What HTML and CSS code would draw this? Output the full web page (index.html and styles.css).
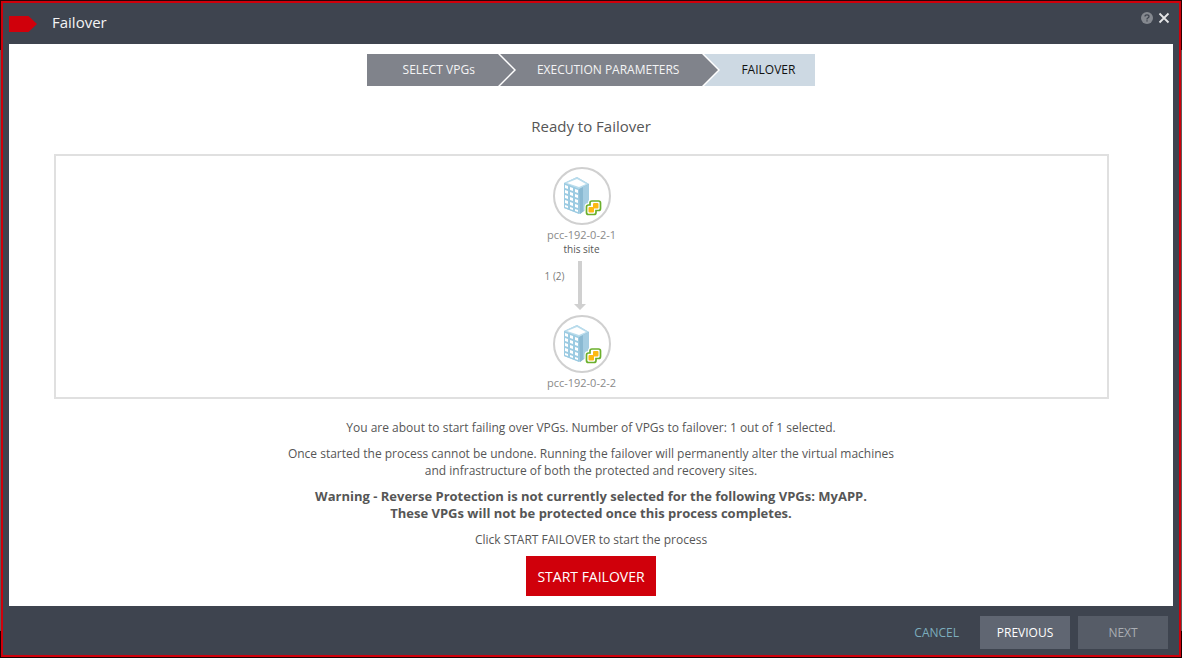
FILE: index.html
```html
<!DOCTYPE html>
<html lang="en">
<head>
<meta charset="utf-8">
<title>Failover</title>
<link rel="stylesheet" href="styles.css">
</head>
<body>
<svg class="defs" width="0" height="0" aria-hidden="true">
  <symbol id="site" viewBox="0 0 58 58">
    <circle cx="29" cy="29" r="28" fill="#fff" stroke="#d0d0d0" stroke-width="2"/>
    <path d="M11 16 24 10 36 17 36 40 27 47 11 41z" fill="#a8cfe3"/>
    <path d="M11 16 24 10 36 17 26 22z" fill="#b9dcec"/>
    <path d="M14 16 24 12 33 17 26 20z" fill="#fff"/>
    <path d="M11 16 26 22 26 47 11 41z" fill="#9ccbe2"/>
    <path d="M26 22 36 17 36 40 27 47z" fill="#8ab9d2"/>
    <path d="M30 20 36 17 36 40 30 44z" fill="#a5cde2"/>
    <g fill="#fff">
      <path d="M12 18 15 19V22L12 21zM17 20 20 21V24L17 23zM22 22 25 23V26L22 25z"/>
      <path d="M12 23 15 24V27L12 26zM17 25 20 26V29L17 28zM22 27 25 28V31L22 30z"/>
      <path d="M12 28 15 29V32L12 31zM17 30 20 31V34L17 33zM22 32 25 33V36L22 35z"/>
      <path d="M12 33 15 34V37L12 36zM17 35 20 36V39L17 38zM22 37 25 38V41L22 40z"/>
      <path d="M12 38 15 39V41L12 40zM17 40 20 41V43L17 42zM22 42 25 43V45L22 44z"/>
    </g>
    <path d="M39 34h6.500q2 0 2 2v5.500q0 2-2 2H43v2q0 2-2 2h-5.500q-2 0-2-2V40q0-2 2-2H37v-2q0-2 2-2z" fill="#fff" stroke="#fff" stroke-width="4"/>
    <path d="M39 34h6.500q2 0 2 2v5.500q0 2-2 2H43v2q0 2-2 2h-5.500q-2 0-2-2V40q0-2 2-2H37v-2q0-2 2-2z" fill="#fff" stroke="#6bb02c" stroke-width="1.700"/>
    <rect x="40" y="36" width="5.500" height="5.500" rx="1" fill="#fdb913"/>
    <rect x="35.500" y="40" width="5.500" height="5.500" rx="1" fill="#fdb913"/>
  </symbol>
</svg>
<main class="dialog">
  <header class="titlebar">
    <svg class="tag" width="28" height="16" viewBox="0 0 28 16" aria-hidden="true"><path d="M0 0h19.500L28 8l-8.500 8H0z" fill="#d0000b"/></svg>
    <h1 class="title">Failover</h1>
    <div class="tools">
      <button class="tool" type="button" aria-label="Help">
        <svg width="12" height="12" viewBox="0 0 12 12"><circle cx="6" cy="6" r="6" fill="#84888f"/><path d="M4 4.600Q4 2.800 6 2.800T8 4.500Q8 5.400 6.800 6 6 6.400 6 7.400M6 8.300v1.300" fill="none" stroke="#3e444f" stroke-width="1.300"/></svg>
      </button>
      <button class="tool" type="button" aria-label="Close">
        <svg width="12" height="12" viewBox="0 0 12 12"><path d="M1.500 1.500l9 9m0-9l-9 9" stroke="#e4e5e7" stroke-width="1.800" fill="none"/></svg>
      </button>
    </div>
  </header>

  <section class="content">
    <ol class="steps">
      <li class="step step-first">SELECT VPGs</li>
      <li class="divider" aria-hidden="true"><svg width="18" height="32" viewBox="0 0 18 32"><path d="M0 0h18v32H0z" fill="#80838b"/><path d="M0-1 17 16 0 33" fill="none" stroke="#fff" stroke-width="1.500"/></svg></li>
      <li class="step">EXECUTION PARAMETERS</li>
      <li class="divider" aria-hidden="true"><svg width="18" height="32" viewBox="0 0 18 32"><path d="M0 0h18v32H0z" fill="#cdd9e3"/><path d="M0-1 17 16 0 33" fill="#80838b" stroke="#fff" stroke-width="1.500"/></svg></li>
      <li class="step step-current" aria-current="step">FAILOVER</li>
    </ol>

    <h2 class="heading">Ready to Failover</h2>

    <div class="diagram">
      <svg class="site" width="58" height="58" role="img" aria-label="Protected site"><use href="#site"/></svg>
      <span class="site-name">pcc-192-0-2-1</span>
      <span class="site-note">this site</span>
      <div class="link">
        <span class="link-label">1 (2)</span>
        <svg width="12" height="49" viewBox="0 0 12 49" aria-hidden="true"><path d="M4 0h4v43h4l-6 6-6-6h4z" fill="#d0d0d0"/></svg>
      </div>
      <svg class="site" width="58" height="58" role="img" aria-label="Recovery site"><use href="#site"/></svg>
      <span class="site-name">pcc-192-0-2-2</span>
    </div>

    <div class="message">
      <p>You are about to start failing over VPGs. Number of VPGs to failover: 1 out of 1 selected.</p>
      <p>Once started the process cannot be undone. Running the failover will permanently alter the virtual machines<br>and infrastructure of both the protected and recovery sites.</p>
      <p class="warning">Warning - Reverse Protection is not currently selected for the following VPGs: MyAPP.<br>These VPGs will not be protected once this process completes.</p>
      <p>Click START FAILOVER to start the process</p>
    </div>
    <button class="start" type="button">START FAILOVER</button>
  </section>

  <footer class="actions">
    <button class="cancel" type="button">CANCEL</button>
    <button class="nav" type="button">PREVIOUS</button>
    <button class="nav" type="button" disabled>NEXT</button>
  </footer>
</main>
</body>
</html>
```
FILE: styles.css
```css
* {
  box-sizing: border-box;
}

body {
  margin: 0;
  padding: 1px 1px 2px;
  min-height: 100vh;
  display: flex;
  background: linear-gradient(#2a0508 50px, #5c5c5c 50px, #5c5c5c calc(100% - 28px), #1a0204 calc(100% - 28px));
  color: #565656;
  font: 12px/17px "Open Sans", sans-serif;
}

button {
  margin: 0;
  padding: 0;
  border: 0;
  background: none;
  color: inherit;
  font: inherit;
  cursor: pointer;
}

h1, h2, p, ol {
  margin: 0;
  padding: 0;
  font-weight: 400;
}

.defs {
  position: absolute;
}

.dialog {
  flex: 1;
  display: flex;
  flex-direction: column;
  padding: 0 6px;
  border: 2px solid #d0000b;
  background: #3e444f;
}

.titlebar {
  display: flex;
  align-items: center;
  height: 41px;
}

.title {
  flex: 1;
  margin-left: 15px;
  padding-bottom: 3px;
  color: #f4f4f5;
  font-size: 15px;
  line-height: 20px;
}

.tools {
  display: flex;
  gap: 5px;
  margin: 0 3px 12px 0;
}

.tool {
  display: flex;
}

.content {
  flex: 1;
  display: flex;
  flex-direction: column;
  align-items: center;
  padding: 10px 0;
  background: #fff;
}

.steps {
  display: flex;
  list-style: none;
  line-height: 32px;
}

.step {
  padding: 0 23px 0 21px;
  background: #80838b;
  color: #f4f4f5;
}

.step-first {
  padding-left: 36px;
}

.step-current {
  padding-right: 20px;
  background: #cdd9e3;
  color: #111;
}

.divider {
  display: flex;
}

.heading {
  margin: 30px 0 18px;
  font-size: 15px;
  line-height: 20px;
}

.diagram {
  align-self: stretch;
  display: flex;
  flex-direction: column;
  align-items: center;
  margin: 0 64px 0 45px;
  padding: 11px 0 7px;
  border: 2px solid #e0e0e0;
  font-size: 11px;
  line-height: 15px;
}

.site-name {
  margin-top: 2px;
  color: #8a8a8a;
}

.site-note {
  font-size: 10px;
}

.link {
  display: grid;
  grid-template-columns: 1fr 12px 1fr;
  column-gap: 9px;
  width: 120px;
  margin: 4px 4px 5px 0;
}

.link-label {
  margin-top: 8px;
  text-align: right;
  color: #7a7a7a;
  font-size: 10px;
}

.message {
  display: flex;
  flex-direction: column;
  gap: 9px;
  margin: 20px 0 8px;
  text-align: center;
}

.warning {
  font-size: 13px;
  font-weight: 700;
}

.start {
  height: 40px;
  padding: 0 11px;
  background: #d0000b;
  color: #fff;
  font-size: 14px;
}

.actions {
  display: flex;
  justify-content: flex-end;
  padding: 10px 5px 6px 0;
}

.cancel {
  margin-right: 21px;
  color: #7cadbd;
}

.nav {
  width: 90px;
  height: 33px;
  background: #606672;
  color: #fff;
}

.nav + .nav {
  margin-left: 8px;
}

.nav:disabled {
  background: #565c67;
  color: #a9adb3;
}
```
